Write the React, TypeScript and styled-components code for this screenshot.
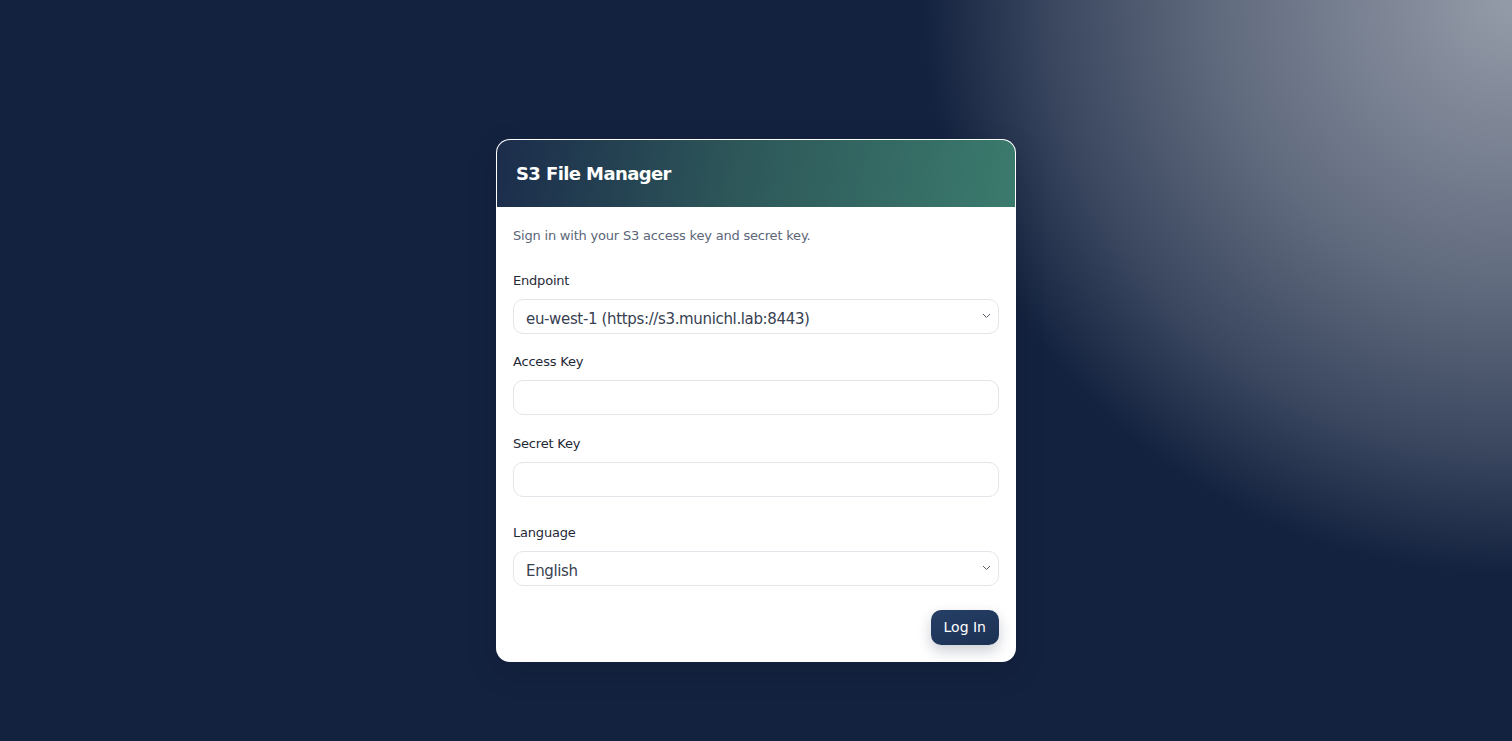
import React from 'react'
import styled, { createGlobalStyle } from 'styled-components'

const GlobalStyle = createGlobalStyle`
  html, body {
    margin: 0;
    padding: 0;
    height: 100%;
  }
  body {
    font-family: 'DejaVu Sans', Verdana, sans-serif;
    background-color: #13223f;
  }
  #root {
    min-height: 100vh;
  }
`

const Page = styled.main`
  min-height: 100vh;
  box-sizing: border-box;
  padding-top: 59px;
  display: flex;
  align-items: center;
  justify-content: center;
  background:
    radial-gradient(
      ellipse 590px 575px at 100% 0%,
      rgba(255, 255, 255, 0.55) 0%,
      rgba(255, 255, 255, 0.33) 50%,
      rgba(255, 255, 255, 0.17) 78%,
      rgba(255, 255, 255, 0) 100%
    ),
    #13223f;
`

const Card = styled.section`
  width: 520px;
  box-sizing: border-box;
  border-radius: 14px;
  border: 1px solid rgba(255, 255, 255, 0.6);
  background-color: #ffffff;
  overflow: hidden;
  box-shadow: 0 10px 30px rgba(5, 12, 30, 0.15);
`

const Header = styled.header`
  height: 67px;
  display: flex;
  align-items: center;
  padding: 0 19px;
  background: linear-gradient(100deg, #1b2c4b 0%, #2d5659 45%, #3b7b6d 100%);
  h1 {
    margin: 0;
    font-size: 18px;
    letter-spacing: -0.6px;
    font-weight: 700;
    color: #ffffff;
  }
`

const Body = styled.form`
  padding: 20px 16px 16px;
  display: flex;
  flex-direction: column;
`

const Intro = styled.p`
  margin: 0 0 26px;
  font-size: 13px;
  letter-spacing: -0.2px;
  line-height: 18px;
  color: #5b6678;
`

const Field = styled.div<{ $gap?: number }>`
  display: flex;
  flex-direction: column;
  gap: 8px;
  margin-bottom: ${(p) => p.$gap ?? 18}px;
`

const Label = styled.label`
  font-size: 13px;
  letter-spacing: -0.2px;
  line-height: 20px;
  color: #1f2937;
`

const SelectWrap = styled.div`
  position: relative;
  svg {
    position: absolute;
    right: 8px;
    top: 50%;
    transform: translateY(-50%);
    pointer-events: none;
  }
`

const baseControl = `
  width: 100%;
  height: 35px;
  box-sizing: border-box;
  border: 1px solid #e2e5ea;
  border-radius: 10px;
  background-color: #ffffff;
  font-family: 'DejaVu Sans', Verdana, sans-serif;
  color: #374151;
  outline: none;
`

const Select = styled.select`
  ${baseControl}
  appearance: none;
  padding: 6px 28px 0 12px;
  font-size: 15px;
  letter-spacing: -0.35px;
`

const Input = styled.input`
  ${baseControl}
  padding: 0 12px;
  font-size: 15px;
`

const Actions = styled.div`
  display: flex;
  justify-content: flex-end;
`

const Button = styled.button`
  height: 35px;
  padding: 0 13px;
  border: none;
  border-radius: 10px;
  background: linear-gradient(160deg, #263f66 0%, #1b3153 100%);
  color: #ffffff;
  font-family: 'DejaVu Sans', Verdana, sans-serif;
  font-size: 14px;
  box-shadow: 0 6px 14px rgba(19, 34, 63, 0.22);
  cursor: pointer;
`

const Chevron = () => (
  <svg width="9" height="6" viewBox="0 0 9 6" fill="none">
    <path d="M1 1l3.5 3.5L8 1" stroke="#555b66" strokeWidth="1" />
  </svg>
)

export default function App() {
  return (
    <>
      <GlobalStyle />
      <Page>
        <Card>
          <Header>
            <h1>S3 File Manager</h1>
          </Header>
          <Body onSubmit={(e) => e.preventDefault()}>
            <Intro>Sign in with your S3 access key and secret key.</Intro>
            <Field>
              <Label htmlFor="endpoint">Endpoint</Label>
              <SelectWrap>
                <Select id="endpoint" defaultValue="eu-west-1">
                  <option value="eu-west-1">eu-west-1 (https://s3.munichl.lab:8443)</option>
                </Select>
                <Chevron />
              </SelectWrap>
            </Field>
            <Field $gap={19}>
              <Label htmlFor="access">Access Key</Label>
              <Input id="access" type="text" />
            </Field>
            <Field $gap={26}>
              <Label htmlFor="secret">Secret Key</Label>
              <Input id="secret" type="password" />
            </Field>
            <Field $gap={24}>
              <Label htmlFor="lang">Language</Label>
              <SelectWrap>
                <Select id="lang" defaultValue="en">
                  <option value="en">English</option>
                  <option value="de">Deutsch</option>
                </Select>
                <Chevron />
              </SelectWrap>
            </Field>
            <Actions>
              <Button type="submit">Log In</Button>
            </Actions>
          </Body>
        </Card>
      </Page>
    </>
  )
}
